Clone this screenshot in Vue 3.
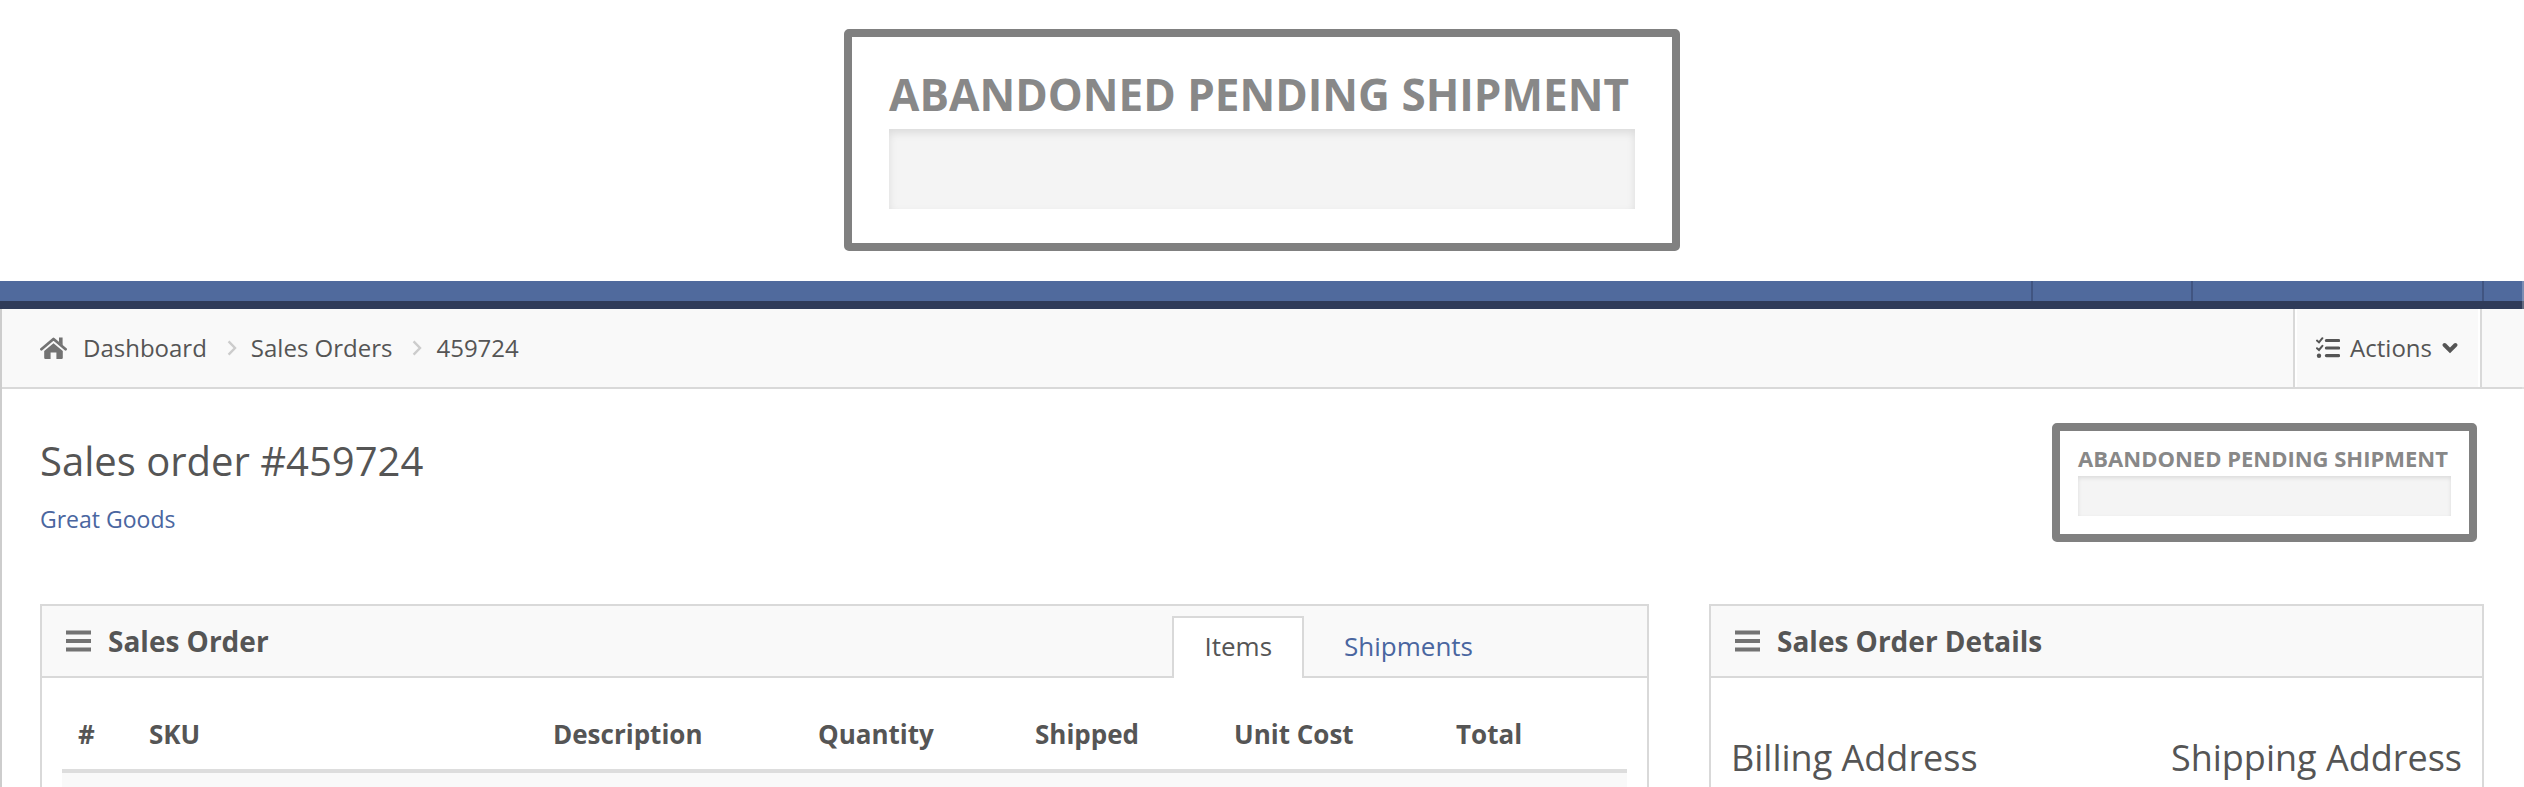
<script setup>
const crumbs = [
  { label: 'Sales Orders', href: '#orders' },
  { label: '459724', href: '#459724' },
]
const columns = [
  { key: 'num', label: '#' },
  { key: 'sku', label: 'SKU' },
  { key: 'description', label: 'Description' },
  { key: 'quantity', label: 'Quantity' },
  { key: 'shipped', label: 'Shipped' },
  { key: 'unit', label: 'Unit Cost' },
  { key: 'total', label: 'Total' },
]
</script>

<template>
  <div class="page">
    <div class="banner">
      <div class="status status-large">
        <strong>ABANDONED PENDING SHIPMENT</strong>
        <div class="track"></div>
      </div>
    </div>

    <header class="topbar">
      <span class="slot slot-a"></span>
      <span class="slot slot-b"></span>
      <span class="slot slot-c"></span>
    </header>

    <main class="content">
      <div class="crumb-bar">
        <nav class="crumbs" aria-label="Breadcrumb">
          <svg class="home" viewBox="0 0 27 22" aria-hidden="true">
            <path d="M13.5 6.2 22.8 14v6.8q0 1.2-1.2 1.2h-5.2v-6.4h-5.8V22h-5.2q-1.2 0-1.2-1.2V14z" />
            <path d="M1.4 12.2 13.5 2 25.6 12.2" class="roof" />
            <path d="M19 .4h3.6v8L19 5.4z" />
          </svg>
          <a href="#dashboard">Dashboard</a>
          <template v-for="c in crumbs" :key="c.label">
            <svg class="sep" viewBox="0 0 10 16" aria-hidden="true"><path d="M1.6 1.4 8 8l-6.4 6.6" /></svg>
            <a :href="c.href">{{ c.label }}</a>
          </template>
        </nav>
        <button class="actions" type="button">
          <svg class="tasks" viewBox="0 0 24 22" aria-hidden="true">
            <path class="bar" d="M10.4 3.5H22.6M10.4 11H22.6M10.4 18.6H22.6" />
            <path class="tick" d="M1 3.6 3 5.4 6.4 1.2M1 11.2 3 13 6.4 8.8" />
            <circle cx="3" cy="18.8" r="2.2" />
          </svg>
          <span>Actions</span>
          <svg class="caret" viewBox="0 0 16 12" aria-hidden="true"><path d="M2.6 3 8 8.4 13.4 3" /></svg>
        </button>
      </div>

      <div class="heading">
        <div>
          <h1>Sales order #459724</h1>
          <a class="customer" href="#customer">Great Goods</a>
        </div>
        <div class="status status-small">
          <strong>ABANDONED PENDING SHIPMENT</strong>
          <div class="track"></div>
        </div>
      </div>

      <div class="panels">
        <section class="panel">
          <div class="panel-head">
            <svg class="menu" viewBox="0 0 25 22" aria-hidden="true"><path d="M0 2.5H25M0 11H25M0 19.5H25" /></svg>
            <h2>Sales Order</h2>
            <div class="tabs" role="tablist">
              <button class="tab active" type="button" role="tab" aria-selected="true">Items</button>
              <button class="tab" type="button" role="tab" aria-selected="false">Shipments</button>
            </div>
          </div>
          <table class="items">
            <thead>
              <tr>
                <th v-for="c in columns" :key="c.key" :class="c.key" scope="col">{{ c.label }}</th>
              </tr>
            </thead>
            <tbody>
              <tr><td v-for="c in columns" :key="c.key"></td></tr>
            </tbody>
          </table>
        </section>

        <section class="panel">
          <div class="panel-head">
            <svg class="menu" viewBox="0 0 25 22" aria-hidden="true"><path d="M0 2.5H25M0 11H25M0 19.5H25" /></svg>
            <h2>Sales Order Details</h2>
          </div>
          <div class="addresses">
            <h3>Billing Address</h3>
            <h3>Shipping Address</h3>
          </div>
        </section>
      </div>
    </main>
  </div>
</template>

<style>
html,
body {
  margin: 0;
  background: #fff;
}
body {
  overflow: hidden;
}
</style>

<style scoped>
.page {
  position: relative;
  height: 100vh;
  overflow: hidden;
  color: #555;
  font: 24px/36px "Open Sans", sans-serif;
}
.page * {
  box-sizing: border-box;
}
/* faint scrollbar gutter along the window's right edge */
.page::after {
  content: "";
  position: absolute;
  top: 0;
  right: 0;
  bottom: 0;
  width: 2px;
  background: rgba(250, 250, 250, 0.25);
}
h1,
h2,
h3 {
  margin: 0;
}
a {
  color: inherit;
  text-decoration: none;
}
svg {
  flex: none;
  fill: none;
}
button {
  margin: 0;
  border: 0;
  background: none;
  color: inherit;
  font: inherit;
  cursor: pointer;
}
.banner {
  display: flex;
  justify-content: center;
  padding: 29px 0 30px;
}
.status {
  border: 8px solid #808080;
  border-radius: 5px;
  background: #fff;
  color: #888;
}
.status strong {
  display: block;
  font-weight: 700;
  white-space: nowrap;
}
.track {
  background: #f4f4f4;
}
.status-large {
  padding: 26px 37px 34px;
}
.status-large strong {
  padding: 0 6px 4px 0;
  font-size: 44px;
  line-height: 62px;
}
.status-large .track {
  height: 80px;
  box-shadow: inset 0 4px 8px rgba(0, 0, 0, 0.1);
}
.status-small {
  padding: 11px 18px 18px;
}
.status-small strong {
  padding: 0 3px 2px 0;
  font-size: 22px;
  line-height: 32px;
}
.status-small .track {
  height: 40px;
  box-shadow: inset 0 2px 4px rgba(0, 0, 0, 0.1);
}
.topbar {
  display: flex;
  justify-content: flex-end;
  height: 28px;
  border-bottom: 8px solid #2f3b59;
  background: #506a9d;
}
.slot {
  border-left: 2px solid #415581;
}
.slot-a {
  width: 160px;
}
.slot-b {
  width: 291px;
}
.slot-c {
  width: 42px;
}
.content {
  border-left: 2px solid #cdcdcd;
}
.crumb-bar {
  display: flex;
  justify-content: space-between;
  height: 80px;
  padding: 0 42px 0 38px;
  border-bottom: 2px solid #d9d9d9;
  background: #f9f9f9;
}
.crumbs {
  display: flex;
  align-items: center;
}
.home {
  width: 27px;
  height: 22px;
  margin-right: 16px;
  fill: #737373;
}
.roof {
  fill: none;
  stroke: #737373;
  stroke-width: 2.8;
  stroke-linecap: round;
  stroke-linejoin: round;
}
.sep {
  width: 10px;
  height: 16px;
  margin: 0 14px 0 20px;
  stroke: #ccc;
  stroke-width: 2.4;
}
.actions {
  display: flex;
  align-items: center;
  padding: 0 22px 0 21px;
  border: solid #d9d9d9;
  border-width: 0 2px;
  box-shadow: inset 2px 0 #fff, inset -2px 0 #fff;
}
.tasks {
  width: 24px;
  height: 22px;
  margin-right: 10px;
  fill: #555;
  stroke: #555;
}
.tasks .bar {
  stroke-width: 3.2;
  stroke-linecap: round;
}
.tasks .tick {
  fill: none;
  stroke-width: 2;
  stroke-linecap: round;
}
.tasks circle {
  stroke: none;
}
.caret {
  width: 16px;
  height: 12px;
  margin-left: 10px;
  stroke: #555;
  stroke-width: 4;
  stroke-linecap: round;
}
.heading {
  display: flex;
  align-items: flex-start;
  justify-content: space-between;
  padding: 34px 47px 62px 38px;
}
.heading h1 {
  margin-top: 10px;
  font-size: 40px;
  font-weight: 400;
  line-height: 56px;
}
.customer {
  display: block;
  margin-top: 12px;
  color: #4a66a0;
  font-size: 23px;
}
.panels {
  display: grid;
  grid-template-columns: 1609fr 775fr;
  gap: 60px;
  padding: 0 40px 0 38px;
}
.panel {
  height: 240px;
  border: 2px solid #d9d9d9;
}
.panel-head {
  display: flex;
  align-items: center;
  height: 72px;
  padding: 0 24px;
  border-bottom: 2px solid #d9d9d9;
  background: #f9f9f9;
}
.menu {
  width: 25px;
  height: 22px;
  margin-right: 17px;
  stroke: #737373;
  stroke-width: 4;
}
.panel-head h2 {
  font-size: 28px;
  font-weight: 700;
  line-height: 36px;
}
.tabs {
  display: flex;
  align-self: flex-end;
  margin: 0 118px -2px auto;
}
.tab {
  height: 62px;
  padding: 0 30px 4px;
  border: solid transparent;
  border-width: 2px 2px 0;
  color: #4a66a0;
  font-size: 26px;
  line-height: 36px;
}
.tab.active {
  margin-right: 8px;
  border-color: #d9d9d9;
  background: #fff;
  color: #555;
}
.items {
  width: calc(100% - 40px);
  margin: 20px 20px 0;
  border-spacing: 0;
  table-layout: fixed;
}
.items th {
  padding: 18px 16px 17px;
  border-bottom: 4px solid #ddd;
  font-size: 26px;
  font-weight: 700;
  line-height: 36px;
  text-align: left;
}
.items td {
  height: 74px;
  background: #f9f9f9;
}
.num {
  width: 71px;
}
.sku {
  width: 404px;
}
.description {
  width: 265px;
}
.quantity {
  width: 217px;
}
.shipped {
  width: 199px;
}
.unit {
  width: 222px;
}
.addresses {
  display: flex;
  justify-content: space-between;
  padding: 56px 20px 0;
}
.addresses h3 {
  font-size: 36px;
  font-weight: 400;
  line-height: 48px;
}
</style>
